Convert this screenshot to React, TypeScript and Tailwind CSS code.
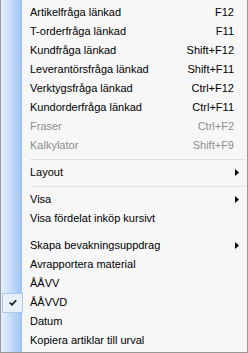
import React from "react";

type Item =
  | { kind: "item"; label: string; shortcut?: string; disabled?: boolean; arrow?: boolean; checked?: boolean }
  | { kind: "sep"; hidden?: boolean };

const items: Item[] = [
  { kind: "item", label: "Artikelfråga länkad", shortcut: "F12" },
  { kind: "item", label: "T-orderfråga länkad", shortcut: "F11" },
  { kind: "item", label: "Kundfråga länkad", shortcut: "Shift+F12" },
  { kind: "item", label: "Leverantörsfråga länkad", shortcut: "Shift+F11" },
  { kind: "item", label: "Verktygsfråga länkad", shortcut: "Ctrl+F12" },
  { kind: "item", label: "Kundorderfråga länkad", shortcut: "Ctrl+F11" },
  { kind: "item", label: "Fraser", shortcut: "Ctrl+F2", disabled: true },
  { kind: "item", label: "Kalkylator", shortcut: "Shift+F9", disabled: true },
  { kind: "sep" },
  { kind: "item", label: "Layout", arrow: true },
  { kind: "sep" },
  { kind: "item", label: "Visa", arrow: true },
  { kind: "item", label: "Visa fördelat inköp kursivt" },
  { kind: "sep", hidden: true },
  { kind: "item", label: "Skapa bevakningsuppdrag", arrow: true },
  { kind: "item", label: "Avrapportera material" },
  { kind: "item", label: "ÅÅVV" },
  { kind: "item", label: "ÅÅVVD", checked: true },
  { kind: "item", label: "Datum" },
  { kind: "item", label: "Kopiera artiklar till urval" },
];

export default function App() {
  return (
    <div
      className="w-[248px] h-[353px] border-x border-b border-[#979797] bg-[#f7f7f7] bg-[linear-gradient(to_right,#e6effb,#cfe1f9_35%,#9fc3f3)] bg-[length:21px_100%] bg-no-repeat pt-[3px] text-[11px] leading-none text-black"
      style={{ fontFamily: '"Liberation Sans", Arial, sans-serif' }}
    >
      {items.map((it, i) =>
        it.kind === "sep" ? (
          <div key={i} className="h-[8px] flex items-center pl-[29px] pr-[1px]">
            {!it.hidden && <div className="h-px w-full bg-[#e2e2e2]" />}
          </div>
        ) : (
          <div key={i} className="h-[19px] flex items-center pr-[8px]">
            <div className="w-[29px] h-full shrink-0 flex items-center">
              {it.checked && (
                <div className="ml-[1px] w-[21px] h-[20px] border border-[#a9c9ef] bg-[#e8f0fb] flex items-center justify-center">
                  <svg width="8" height="7" viewBox="0 0 8 7">
                    <path d="M0.8 3.6 L3 5.8 L7.2 1.2" fill="none" stroke="#1a1a1a" strokeWidth="1.7" />
                  </svg>
                </div>
              )}
            </div>
            <span className={"flex-1 whitespace-nowrap " + (it.disabled ? "text-[#8d8d8d]" : "")}>{it.label}</span>
            {it.shortcut && (
              <span className={"mr-[5px] whitespace-nowrap " + (it.disabled ? "text-[#8d8d8d]" : "")}>{it.shortcut}</span>
            )}
            {it.arrow && (
              <svg width="4" height="7" viewBox="0 0 4 7">
                <path d="M0 0 L4 3.5 L0 7 Z" fill="#000" />
              </svg>
            )}
          </div>
        )
      )}
    </div>
  );
}
